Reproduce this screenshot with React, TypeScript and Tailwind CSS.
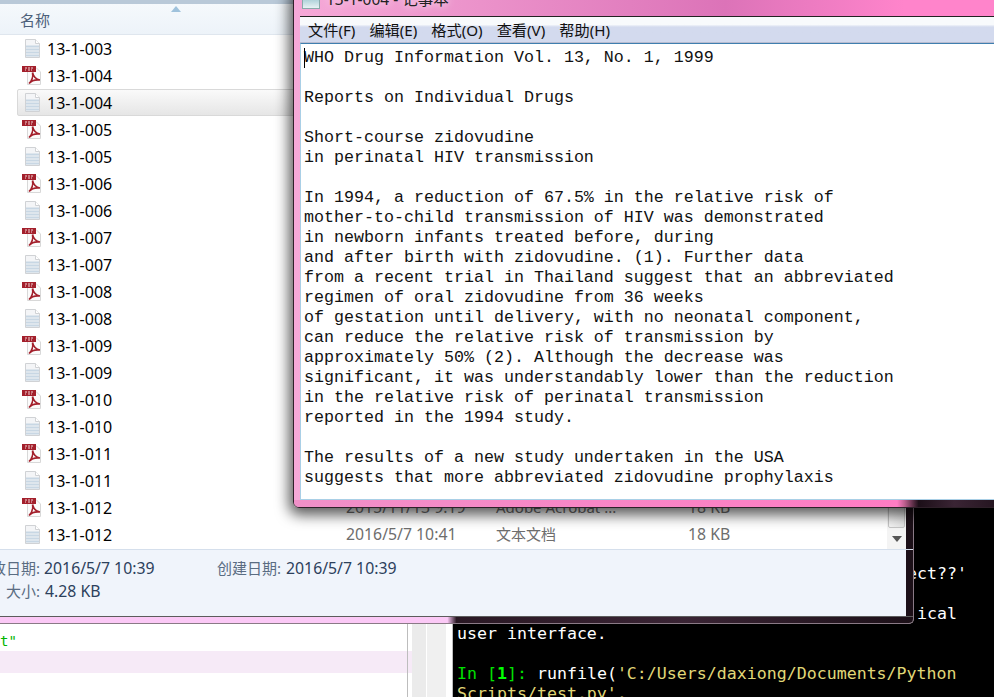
const cjk = '"Noto Sans", "Noto Sans CJK SC", sans-serif';

const files = [
  ["txt", "13-1-003"],
  ["pdf", "13-1-004"],
  ["txt", "13-1-004"],
  ["pdf", "13-1-005"],
  ["txt", "13-1-005"],
  ["pdf", "13-1-006"],
  ["txt", "13-1-006"],
  ["pdf", "13-1-007"],
  ["txt", "13-1-007"],
  ["pdf", "13-1-008"],
  ["txt", "13-1-008"],
  ["pdf", "13-1-009"],
  ["txt", "13-1-009"],
  ["pdf", "13-1-010"],
  ["txt", "13-1-010"],
  ["pdf", "13-1-011"],
  ["txt", "13-1-011"],
  ["pdf", "13-1-012"],
  ["txt", "13-1-012"],
];

const noteLines = [
  "WHO Drug Information Vol. 13, No. 1, 1999",
  "",
  "Reports on Individual Drugs",
  "",
  "Short-course zidovudine",
  "in perinatal HIV transmission",
  "",
  "In 1994, a reduction of 67.5% in the relative risk of",
  "mother-to-child transmission of HIV was demonstrated",
  "in newborn infants treated before, during",
  "and after birth with zidovudine. (1). Further data",
  "from a recent trial in Thailand suggest that an abbreviated",
  "regimen of oral zidovudine from 36 weeks",
  "of gestation until delivery, with no neonatal component,",
  "can reduce the relative risk of transmission by",
  "approximately 50% (2). Although the decrease was",
  "significant, it was understandably lower than the reduction",
  "in the relative risk of perinatal transmission",
  "reported in the 1994 study.",
  "",
  "The results of a new study undertaken in the USA",
  "suggests that more abbreviated zidovudine prophylaxis",
];

function TxtIcon() {
  return (
    <svg width="15" height="19" viewBox="0 0 15 19" className="shrink-0 ml-[3px]">
      <path d="M.5 .5H10.500L14.500 4.500V18.500H.5Z" fill="#f4f5f7" stroke="#d0d2d5" />
      <path d="M1 7.500h13M1 10.500h13M1 13.500h13M1 16.500h13" stroke="#c8d7e4" strokeWidth="2" />
      <path d="M10.500 .5V4.500H14.500" fill="#fff" stroke="#d0d2d5" />
    </svg>
  );
}

function PdfIcon() {
  return (
    <svg width="20" height="20" viewBox="0 0 20 20" className="shrink-0">
      <path d="M5.500 1.500H14L18.500 6V18.500H5.500Z" fill="#fbfbfb" stroke="#d8d8d8" />
      <rect x="0" y="0" width="14" height="6" fill="#a3202c" />
      <path d="M3 2h2M6 2h2M9 2h2M3 4h1M6 4h2M9 4h1" stroke="#f2d6d8" strokeWidth="1" />
      <path d="M7 17.500C10 14.500 11.200 10 10.500 6.500C11.500 10.500 13.500 13.500 18 14C13.500 13.500 9.500 14.500 7 17.500Z" fill="none" stroke="#a3202c" strokeWidth="1.600" />
    </svg>
  );
}

function FileRow({ kind, name, selected }: { kind: string; name: string; selected: boolean }) {
  return (
    <div
      className={`h-[27px] flex items-center pl-[4px] ml-[17px] w-[868px] rounded-[2px] border ${
        selected
          ? "border-[#d9d9d9] bg-gradient-to-b from-[#fafafa] to-[#e6e6e6]"
          : "border-transparent"
      }`}
    >
      <div className="w-[25px] flex justify-start">
        {kind === "pdf" ? <PdfIcon /> : <TxtIcon />}
      </div>
      <span className="text-[16px] text-black">{name}</span>
    </div>
  );
}

function Explorer() {
  return (
    <div
      className="absolute left-0 top-0 w-[914px] h-[624px] flex flex-col bg-white overflow-hidden rounded-br-[5px] border-b border-r border-[#8a7a86]"
      style={{ fontFamily: cjk }}
    >
      <div className="h-[4px] bg-[#b9c9d8] shrink-0" />
      <div className="flex-1 flex min-h-0 bg-white">
        <div className="flex-1 min-w-0 flex flex-col">
          <div className="h-[31px] shrink-0 relative pl-[20px] pt-[2px] flex items-center bg-gradient-to-b from-[#f5f9fc] to-[#edf3f9] border-b border-[#dfe6ee]">
            <span className="text-[15px] text-[#4c607a]">名称</span>
            <svg width="10" height="6" viewBox="0 0 10 6" className="absolute left-[171px] top-[2px]">
              <path d="M0 6L5 0L10 6Z" fill="#9fc2dc" />
            </svg>
          </div>
          <div className="flex-1 min-h-0">
            {files.map(([kind, name], i) => (
              <div key={i} className="relative">
                <FileRow kind={kind} name={name} selected={i === 2} />
                {i >= 17 && (
                  <div className="absolute left-[346px] top-0 h-[27px] flex items-center text-[15.800px] text-[#6d6d6d]">
                    <span className="w-[150px]">{i === 17 ? "2015/11/13 9:19" : "2016/5/7 10:41"}</span>
                    <span className="w-[192px] text-[15px]">{i === 17 ? "Adobe Acrobat ..." : "文本文档"}</span>
                    <span>18 KB</span>
                  </div>
                )}
              </div>
            ))}
          </div>
        </div>
        <div className="w-[19px] shrink-0 bg-[#f4f4f4] flex flex-col justify-end">
          <div className="h-[22px] mx-[1px] bg-gradient-to-r from-[#f5f5f5] to-[#e4e4e4] border border-[#c5c5c5] rounded-[2px]" />
          <div className="h-[21px] flex items-center justify-center">
            <svg width="10" height="6" viewBox="0 0 10 6">
              <path d="M0 0H10L5 6Z" fill="#555" />
            </svg>
          </div>
        </div>
        <div className="w-[7px] shrink-0 bg-[#1c1018]" />
      </div>
      <div className="h-[67px] shrink-0 flex bg-[#f0f4fb] border-t border-[#d5dfec]">
        <div className="flex-1 relative text-[15.800px] text-[#2c405c]">
          <div className="absolute -left-[9px] top-[4px] h-[29px] flex items-center whitespace-nowrap">
            <span className="text-[15px] text-[#5a6c82]">改日期:</span>
            <span className="ml-[4px]">2016/5/7 10:39</span>
          </div>
          <div className="absolute left-[217px] top-[4px] h-[29px] flex items-center whitespace-nowrap">
            <span className="text-[15px] text-[#5a6c82]">创建日期:</span>
            <span className="ml-[5px]">2016/5/7 10:39</span>
          </div>
          <div className="absolute left-[6px] top-[27px] h-[29px] flex items-center whitespace-nowrap">
            <span className="text-[15px] text-[#5a6c82]">大小:</span>
            <span className="ml-[5px]">4.28 KB</span>
          </div>
        </div>
        <div className="w-[7px] shrink-0 bg-[#1c1018]" />
      </div>
      <div className="h-[7px] shrink-0 border-t border-[#5c5c5c] bg-[linear-gradient(to_right,#fbc9f6_0%,#fbc9f6_49%,#2a1824_50%,#3a2434_75%,#1c1018_100%)]" />
    </div>
  );
}

function Notepad() {
  return (
    <div className="absolute left-[293px] -top-[10px] w-[720px] h-[518px] rounded-[6px] border border-[#2e2029] flex flex-col shadow-[0_3px_14px_4px_rgba(0,0,0,0.65)] bg-gradient-to-r from-[#f6a9d8] via-[#dc73b8] via-60% to-[#ff84cb] to-85%">
      <div className="h-[25px] shrink-0 relative" style={{ fontFamily: cjk }}>
        <div className="absolute left-[8px] top-[1px] w-[18px] h-[17px] border border-[#8aa] bg-gradient-to-b from-[#7fb7c4] to-[#e8f2f4]" />
        <span className="absolute left-[32px] top-[-3px] text-[15.500px] text-[#222] whitespace-nowrap [text-shadow:0_0_8px_#ffffff]">13-1-004 - 记事本</span>
      </div>
      <div className="flex-1 min-h-0 flex flex-col border-t border-[#222] bg-white mx-[6px]">
        <div
          className="h-[26px] shrink-0 flex items-center pl-[8px] pt-[1px] gap-[14px] text-[15.200px] text-[#111] bg-gradient-to-b from-[#f8fafc] from-30% to-[#d3daee] to-40% border-b border-[#b8bcd0]"
          style={{ fontFamily: cjk }}
        >
          <span>文件(F)</span>
          <span>编辑(E)</span>
          <span>格式(O)</span>
          <span>查看(V)</span>
          <span>帮助(H)</span>
        </div>
        <div className="flex-1 min-h-0 border-t border-[#3f7faf] border-b-[#a9cfe6] border-b border-l border-l-[#a9cfe6] pl-[3px] pt-[4px] overflow-hidden">
          <div className="relative font-['Liberation_Mono',monospace] text-[16.670px] leading-[20px] text-[#111] whitespace-pre">
            <div className="absolute left-0 top-0 w-[1px] h-[20px] bg-black" />
            {noteLines.map((line, i) => (
              <div key={i} className="h-[20px]">{line}</div>
            ))}
          </div>
        </div>
      </div>
      <div className="h-[7px] shrink-0 rounded-b-[5px] bg-[linear-gradient(to_right,#f090c8_0%,#ff7cc4_84%,#c06090_85%,#1c0f18_87%,#3a2434_92%,#1c0f18_100%)]" />
    </div>
  );
}

function Background() {
  return (
    <div className="absolute inset-0 flex bg-black overflow-hidden">
      <div className="w-[412px] shrink-0 bg-white relative pt-[631px]">
        <div className="font-['DejaVu_Sans_Mono',monospace] text-[14px] leading-[20px] text-[#00b400]">t"</div>
        <div className="h-[22px] bg-[#f6eaf7]" />
        <div className="absolute left-[407px] top-0 bottom-0 w-[1px] bg-[#bdbdbd]" />
      </div>
      <div className="w-[14px] shrink-0 bg-[#ebebeb]" />
      <div className="w-[20px] shrink-0 bg-[#f0f0f0] border-l border-white" />
      <div className="w-[7px] shrink-0 bg-white border-r border-[#bdbdbd]" />
      <div className="flex-1 pl-[4px] pt-[564px] font-['DejaVu_Sans_Mono',monospace] text-[16.600px] leading-[20px] text-white whitespace-pre">
        <div className="pl-[450px]">ect??'</div>
        <div className="h-[20px]" />
        <div className="pl-[460px]">ical</div>
        <div>user interface.</div>
        <div className="h-[20px]" />
        <div>
          <span className="text-[#00e000]">In [</span>
          <span className="text-[#00ff00] font-bold">1</span>
          <span className="text-[#00e000]">]:</span> runfile(
          <span className="text-[#e0d878]">'C:/Users/daxiong/Documents/Python</span>
        </div>
        <div className="text-[#e0d878]">Scripts/test.py',</div>
      </div>
    </div>
  );
}

export default function App() {
  return (
    <div className="relative w-[994px] h-[697px] overflow-hidden bg-black">
      <Background />
      <Explorer />
      <Notepad />
    </div>
  );
}
